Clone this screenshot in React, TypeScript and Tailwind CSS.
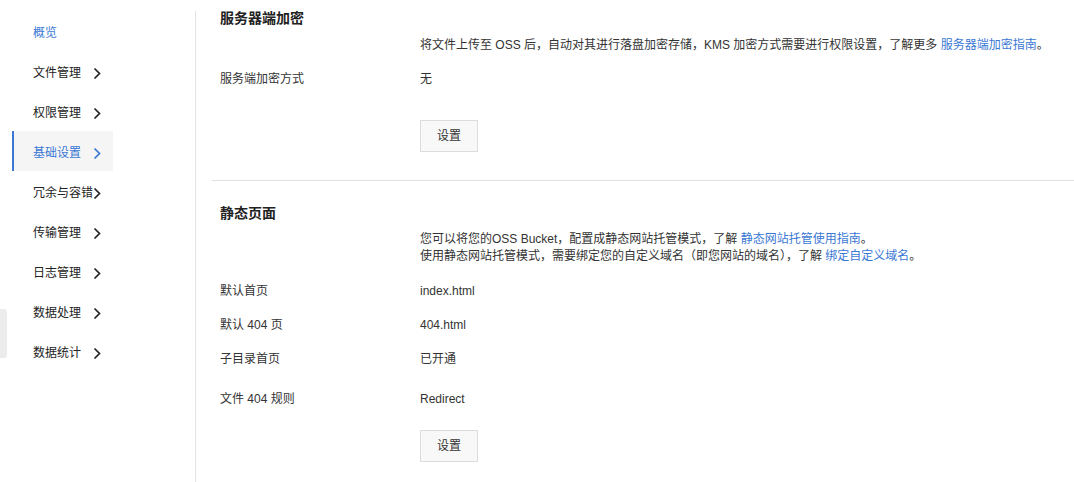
import React from 'react';

const menu = ['概览', '文件管理', '权限管理', '基础设置', '冗余与容错', '传输管理', '日志管理', '数据处理', '数据统计'];

function Chevron({ active }: { active: boolean }) {
  return (
    <svg width="8" height="13" viewBox="0 0 8 13" className="shrink-0">
      <path d="M1.5 1.5 L6.5 6.5 L1.5 11.5" fill="none" stroke={active ? '#3a78d4' : '#222'} strokeWidth="1.7" />
    </svg>
  );
}

function Row({ label, children, className = '' }: { label: string; children: React.ReactNode; className?: string }) {
  return (
    <div className={`flex leading-[18px] ${className}`}>
      <div className="w-[200px] shrink-0 text-[#333]">{label}</div>
      <div className="text-[#333]">{children}</div>
    </div>
  );
}

function SetButton({ className = '' }: { className?: string }) {
  return (
    <div className={`flex ${className}`}>
      <div className="w-[200px] shrink-0" />
      <button className="w-[58px] h-[32px] border border-[#dcdcdc] bg-[#f8f8f8] text-[#333] text-[12px]">设置</button>
    </div>
  );
}

export default function App() {
  const font = { fontFamily: '"Liberation Sans", "Noto Sans CJK SC", sans-serif' };
  return (
    <div className="relative flex w-[1074px] h-[482px] bg-white text-[12px] overflow-hidden" style={font}>
      <div className="absolute left-0 top-[309px] w-[7px] h-[49px] bg-[#ececec] rounded-r-[3px]" />

      <aside className="w-[196px] shrink-0 mt-[11px] border-r border-[#e3e3e3]">
        <ul className="pl-[12px]">
          {menu.map((m, i) => {
            const active = i === 3;
            const first = i === 0;
            return (
              <li
                key={m}
                className={`w-[101px] h-[40px] flex items-center pl-[19px] pt-[4px] border-l-2 ${active ? 'bg-[#f5f5f5] border-[#3a78d4]' : 'border-transparent'}`}
              >
                <span className={`w-[60px] whitespace-nowrap text-[12px] ${active || first ? 'text-[#3a78d4]' : 'text-[#222]'}`}>{m}</span>
                {!first && <Chevron active={active} />}
              </li>
            );
          })}
        </ul>
      </aside>

      <main className="flex-1 pl-[16px]">
        <section className="pl-[8px] pt-[8px]">
          <h2 className="text-[14px] font-bold leading-[20px] text-[#222]">服务器端加密</h2>
          <Row label="" className="mt-[8px]">
            将文件上传至 OSS 后，自动对其进行落盘加密存储，KMS 加密方式需要进行权限设置，了解更多{' '}
            <a className="text-[#3a78d4]">服务器端加密指南</a>。
          </Row>
          <Row label="服务端加密方式" className="mt-[16px]">无</Row>
          <SetButton className="mt-[32px]" />
        </section>

        <div className="mt-[28px] border-t border-[#e0e0e0]" />

        <section className="pl-[8px] pt-[22px]">
          <h2 className="text-[14px] font-bold leading-[20px] text-[#222]">静态页面</h2>
          <div className="flex mt-[8px] leading-[17px]">
            <div className="w-[200px] shrink-0" />
            <div className="text-[#333]">
              <p>
                您可以将您的OSS Bucket，配置成静态网站托管模式，了解 <a className="text-[#3a78d4]">静态网站托管使用指南</a>。
              </p>
              <p>
                使用静态网站托管模式，需要绑定您的自定义域名（即您网站的域名），了解 <a className="text-[#3a78d4]">绑定自定义域名</a>。
              </p>
            </div>
          </div>
          <Row label="默认首页" className="mt-[17px]">index.html</Row>
          <Row label="默认 404 页" className="mt-[16px]">404.html</Row>
          <Row label="子目录首页" className="mt-[16px]">已开通</Row>
          <Row label="文件 404 规则" className="mt-[22px]">Redirect</Row>
          <SetButton className="mt-[22px]" />
        </section>
      </main>
    </div>
  );
}
